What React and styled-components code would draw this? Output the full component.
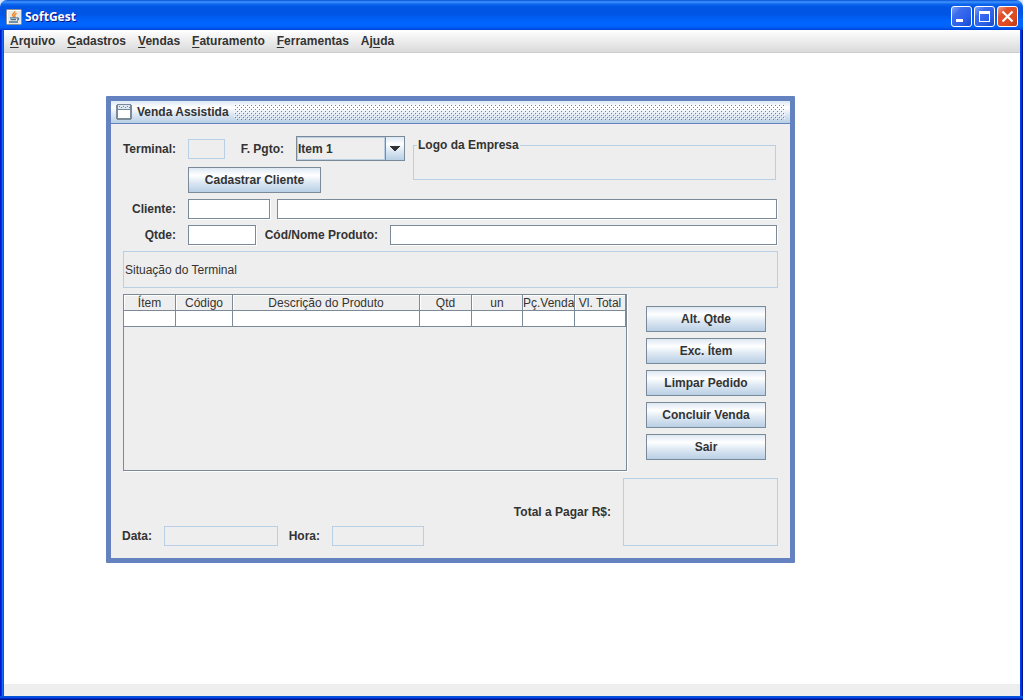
import { useState } from 'react'
import styled, { createGlobalStyle } from 'styled-components'

const GlobalStyle = createGlobalStyle`
  * {
    box-sizing: border-box;
  }

  body {
    margin: 0;
  }

  body, button, input, select {
    font-family: "Liberation Sans", Arial, sans-serif;
    font-size: 12px;
    font-weight: 700;
    line-height: 14px;
    color: #333;
  }
`

const metal = `linear-gradient(
  to bottom,
  #dde8f3 0%,
  #ffffff 30%,
  #dde8f3 60%,
  #b8cfe5 100%
)`

const AppWindow = styled.div`
  display: flex;
  flex-direction: column;
  min-height: 100vh;
  background: linear-gradient(to right, #0019cf 0 1px, #0831d9 1px 2px, #166aee 2px 3px, #0855dd 3px 4px, #0855dd 50%, #0140e8 50% calc(100% - 2px), #0831c8 calc(100% - 2px) calc(100% - 1px), #00138c calc(100% - 1px));
`

const TitleBar = styled.header`
  display: flex;
  align-items: center;
  gap: 3px;
  height: 30px;
  padding: 3px 5px 0 6px;
  border-radius: 7px 7px 0 0;
  background: linear-gradient(
    to bottom,
    #0a4fd6 0,
    #3d95ff 2px,
    #1067ee 4px,
    #0055e5 7px,
    #0055e5 14px,
    #0062fb 20px,
    #0066ff 25px,
    #005bf0 28px,
    #003dd7 30px
  );
`

const TopCorners = styled.div`
  background: #d8e4f8;
`

const WindowTitle = styled.h1`
  flex: 1;
  margin: 0;
  font-family: "Open Sans", "Noto Sans", sans-serif;
  font-size: 12px;
  line-height: 16px;
  color: #fff;
  text-shadow: 1px 1px 0 #0f1089;
`

const WindowControls = styled.div`
  display: flex;
  gap: 2px;
`

const ControlButton = styled.button`
  display: flex;
  width: 21px;
  height: 21px;
  padding: 0;
  border: 1px solid #fff;
  border-radius: 3px;
  background: ${({ $close }) =>
    $close
      ? 'linear-gradient(135deg, #f0a088 0%, #e0502c 30%, #dc4a20 70%, #b83810 100%)'
      : 'linear-gradient(135deg, #7da2f5 0%, #3a6cee 30%, #2a5ee8 70%, #1848c8 100%)'};
`

const Client = styled.div`
  display: flex;
  flex: 1;
  flex-direction: column;
  margin: 0 3px 0 4px;
`

const MenuBar = styled.nav`
  display: flex;
  height: 23px;
  border-bottom: 1px solid #ccc;
  background: linear-gradient(to bottom, #fff, #dadada);
`

const MenuItem = styled.button`
  padding: 0 6px;
  border: 0;
  background: none;

  u {
    text-underline-offset: 2px;
  }
`

const Desktop = styled.main`
  position: relative;
  flex: 1;
  min-height: 520px;
  background: #fff;
`

const StatusBar = styled.footer`
  height: 12px;
  background: #eee;
`

const BottomEdge = styled.div`
  height: 4px;
  background: linear-gradient(to bottom, #0855dd 0 1px, #0347e4 1px 2px, #0130c0 2px 3px, #00138c 3px);
`

const Frame = styled.section`
  position: absolute;
  top: 43px;
  left: 102px;
  width: 689px;
  border: 5px solid #6382bf;
  border-radius: 1px;
  background: #eee;
`

const FrameTitleBar = styled.div`
  display: flex;
  align-items: center;
  gap: 5px;
  height: 23px;
  padding: 0 5px;
  border-bottom: 1px solid #6382bf;
  background: ${metal};
`

const FrameTitle = styled.h2`
  margin: 0;
  font-size: 12px;
  line-height: 14px;
`

const Bumps = styled.svg`
  flex: 1;
  height: 16px;
`

const Form = styled.form`
  display: flex;
  flex-direction: column;
  gap: 6px;
  padding: 12px;
`

const Top = styled.div`
  display: flex;
  gap: 8px;
`

const TopFields = styled.div`
  display: flex;
  flex-direction: column;
  gap: 6px;
`

const Row = styled.div`
  display: flex;
  align-items: center;
  gap: 12px;
  padding-right: ${({ $inset }) => ($inset ? 1 : 0)}px;
`

const FieldPair = styled.div`
  display: flex;
  flex: 1;
  gap: 7px;
`

const Label = styled.label`
  display: flex;
  flex: none;
  justify-content: flex-end;
  width: ${({ $width }) => ($width ? `${$width}px` : 'auto')};
  white-space: nowrap;
`

const TextField = styled.input`
  flex: ${({ $width }) => ($width ? 'none' : 1)};
  width: ${({ $width }) => ($width ? `${$width}px` : 'auto')};
  min-width: 0;
  height: 20px;
  padding: 0 2px;
  border: 1px solid #7a8a99;
  border-radius: 0;
  outline: 0;
  background: #fff;
  font-weight: 400;
  box-shadow: 1px 1px 0 #fff;
`

const ReadOnlyField = styled(TextField).attrs({ readOnly: true })`
  height: ${({ $height }) => $height || 20}px;
  border-color: #b8cfe5;
  background: #eee;
  box-shadow: none;
`

const PaymentGroup = styled.div`
  display: flex;
  align-items: center;
  gap: 12px;
  margin-left: 5px;
`

const Combo = styled.div`
  position: relative;
  width: 109px;
  height: 25px;
  border: 1px solid #7a8a99;
`

const Select = styled.select`
  appearance: none;
  width: 100%;
  height: 100%;
  padding: 0 20px 0 0;
  border: 1px solid #b8cfe5;
  border-radius: 0;
  outline: 0;
  background: #eee;
`

const ComboArrow = styled.span`
  position: absolute;
  top: 0;
  right: 0;
  bottom: 0;
  display: flex;
  align-items: center;
  justify-content: center;
  width: 19px;
  border-left: 1px solid #7a8a99;
  background: ${metal};
  box-shadow: -1px 0 0 #b8cfe5;
  pointer-events: none;
`

const Button = styled.button`
  height: 26px;
  padding: 0 15px;
  border: 1px solid #7a8a99;
  border-radius: 0;
  background: ${metal};
  white-space: nowrap;
`

const ClientButton = styled(Button)`
  align-self: flex-start;
  width: 133px;
  margin-left: 65px;
`

const LogoBox = styled.fieldset`
  flex: 1;
  height: 42px;
  margin: 2px 2px 0 0;
  padding: 0 3px;
  border: 1px solid #b8cfe5;

  legend {
    padding: 0 1px;
  }
`

const Situation = styled.output`
  display: flex;
  align-items: center;
  height: 37px;
  padding: 0 1px;
  border: 1px solid #b8cfe5;
  font-weight: 400;
`

const Middle = styled.div`
  display: flex;
  height: 178px;
  padding-bottom: 1px;
`

const TablePane = styled.div`
  width: 504px;
  border: 1px solid #7a8a99;
  box-shadow: 1px 1px 0 #fff;
`

const ItemsTable = styled.table`
  width: 100%;
  border-spacing: 0;
  table-layout: fixed;
  font-weight: 400;

  th, td {
    height: 16px;
    padding: 0;
    border-right: 1px solid #7a8a99;
    border-bottom: 1px solid #7a8a99;
    white-space: nowrap;
  }

  th {
    overflow: hidden;
    font-weight: 400;
    box-shadow: inset 1px 1px 0 #fff;
  }

  td {
    background: #fff;
  }
`

const Actions = styled.div`
  display: flex;
  flex-direction: column;
  gap: 6px;
  width: 120px;
  margin: 12px 12px 0 auto;
`

const Bottom = styled.div`
  display: flex;
  align-items: flex-end;
  justify-content: space-between;
`

const menus = [
  ['', 'A', 'rquivo'],
  ['', 'C', 'adastros'],
  ['', 'V', 'endas'],
  ['', 'F', 'aturamento'],
  ['', 'F', 'erramentas'],
  ['Aj', 'u', 'da'],
]

const columns = [
  { title: 'Ítem', width: 52 },
  { title: 'Código', width: 57 },
  { title: 'Descrição do Produto', width: 187 },
  { title: 'Qtd', width: 52 },
  { title: 'un', width: 51 },
  { title: 'Pç.Venda', width: 52 },
  { title: 'Vl. Total', width: 51 },
]

const actions = ['Alt. Qtde', 'Exc. Ítem', 'Limpar Pedido', 'Concluir Venda', 'Sair']

function JavaIcon() {
  return (
    <svg width="16" height="16" viewBox="0 0 16 16" aria-hidden="true">
      <rect x="0.5" y="0.5" width="15" height="15" rx="1" fill="#e9e9e6" stroke="#8b8f94" />
      <path d="M1.5 14.5v-13h13" fill="none" stroke="#fff" />
      <path d="M8.8 2.2c.8 1.5-2.6 2.4-2.2 3.9.2.7.9 1.1 1 1.9M10.6 4.3c-1.5.7-2.2 1.3-1.8 2.2.3.6.3 1-.2 1.5" fill="none" stroke="#ee8322" strokeWidth="1.4" />
      <path d="M4 8.9h6.5M4.6 10.6h5.4M3 13h9M10.8 9c2.4-.5 2.4 1.6.2 2.4" fill="none" stroke="#4e7494" strokeWidth="1.3" />
    </svg>
  )
}

function FrameIcon() {
  return (
    <svg width="16" height="16" viewBox="0 0 16 16" shapeRendering="crispEdges" aria-hidden="true">
      <path d="M1 0h14v1h1v14h-1v1H1v-1H0V1h1z" fill="#7a8a99" />
      <path d="M2 1h12v4H2z" fill="#dde8f3" />
      <path d="M2 6h12v8H2z" fill="#fff" />
      <path d="M3 2h1v1H3zM7 2h1v1H7zM11 2h1v1h-1zM5 3h1v1H5zM9 3h1v1H9zM13 3h1v1h-1z" fill="#6382bf" />
    </svg>
  )
}

function AppTitleBar() {
  return (
    <TopCorners>
      <TitleBar>
        <JavaIcon />
        <WindowTitle>SoftGest</WindowTitle>
        <WindowControls>
          <ControlButton type="button" aria-label="Minimizar">
            <svg width="19" height="19" shapeRendering="crispEdges">
              <path d="M4 12h7v3H4z" fill="#fff" />
            </svg>
          </ControlButton>
          <ControlButton type="button" aria-label="Maximizar">
            <svg width="19" height="19" shapeRendering="crispEdges">
              <path d="M4 4h11v11H4zM5 7v7h9V7z" fill="#fff" fillRule="evenodd" />
            </svg>
          </ControlButton>
          <ControlButton type="button" aria-label="Fechar" $close>
            <svg width="19" height="19">
              <path d="M4.5 4.5l10 10M14.5 4.5l-10 10" stroke="#fff" strokeWidth="2.2" />
            </svg>
          </ControlButton>
        </WindowControls>
      </TitleBar>
    </TopCorners>
  )
}

function SaleForm() {
  const [payment, setPayment] = useState('Item 1')

  return (
    <Form onSubmit={(e) => e.preventDefault()}>
      <Top>
        <TopFields>
          <Row>
            <Label $width={53} htmlFor="terminal">Terminal:</Label>
            <ReadOnlyField $width={37} id="terminal" />
            <PaymentGroup>
              <Label $width={42} htmlFor="pagamento">F. Pgto:</Label>
              <Combo>
                <Select id="pagamento" value={payment} onChange={(e) => setPayment(e.target.value)}>
                  <option>Item 1</option>
                  <option>Item 2</option>
                  <option>Item 3</option>
                  <option>Item 4</option>
                </Select>
                <ComboArrow>
                  <svg width="10" height="5" shapeRendering="crispEdges">
                    <path d="M0 0h10v1H9v1H8v1H7v1H6v1H4V4H3V3H2V2H1V1H0z" fill="#333" />
                  </svg>
                </ComboArrow>
              </Combo>
            </PaymentGroup>
          </Row>
          <ClientButton type="button">Cadastrar Cliente</ClientButton>
        </TopFields>
        <LogoBox>
          <legend>Logo da Empresa</legend>
        </LogoBox>
      </Top>

      <Row $inset>
        <Label $width={53} htmlFor="cliente">Cliente:</Label>
        <FieldPair>
          <TextField $width={82} id="cliente" />
          <TextField aria-label="Nome do cliente" />
        </FieldPair>
      </Row>

      <Row $inset>
        <Label $width={53} htmlFor="qtde">Qtde:</Label>
        <TextField $width={68} id="qtde" />
        <Label $width={110} htmlFor="produto">Cód/Nome Produto:</Label>
        <TextField id="produto" />
      </Row>

      <Situation>Situação do Terminal</Situation>

      <Middle>
        <TablePane>
          <ItemsTable>
            <colgroup>
              {columns.map((col) => (
                <col key={col.title} width={col.width} />
              ))}
            </colgroup>
            <thead>
              <tr>
                {columns.map((col) => (
                  <th key={col.title} scope="col">{col.title}</th>
                ))}
              </tr>
            </thead>
            <tbody>
              <tr>
                {columns.map((col) => (
                  <td key={col.title} />
                ))}
              </tr>
            </tbody>
          </ItemsTable>
        </TablePane>
        <Actions>
          {actions.map((action) => (
            <Button key={action} type="button">{action}</Button>
          ))}
        </Actions>
      </Middle>

      <Bottom>
        <Row>
          <Label $width={29} htmlFor="data">Data:</Label>
          <ReadOnlyField $width={114} id="data" />
          <Label $width={30} htmlFor="hora">Hora:</Label>
          <ReadOnlyField $width={92} id="hora" />
        </Row>
        <Row>
          <Label htmlFor="total">Total a Pagar R$:</Label>
          <ReadOnlyField $width={155} $height={68} id="total" />
        </Row>
      </Bottom>
    </Form>
  )
}

function App() {
  return (
    <AppWindow>
      <GlobalStyle />
      <AppTitleBar />
      <Client>
        <MenuBar>
          {menus.map(([before, key, after]) => (
            <MenuItem key={key + after} type="button">
              {before}<u>{key}</u>{after}
            </MenuItem>
          ))}
        </MenuBar>
        <Desktop>
          <Frame>
            <FrameTitleBar>
              <FrameIcon />
              <FrameTitle>Venda Assistida</FrameTitle>
              <Bumps shapeRendering="crispEdges" aria-hidden="true">
                <defs>
                  <pattern id="bumps" width="4" height="4" patternUnits="userSpaceOnUse">
                    <path d="M1 1h1v1H1zM3 3h1v1H3z" fill="#6382bf" />
                    <path d="M2 2h1v1H2zM0 0h1v1H0z" fill="#fff" />
                  </pattern>
                </defs>
                <rect width="100%" height="16" fill="url(#bumps)" />
              </Bumps>
            </FrameTitleBar>
            <SaleForm />
          </Frame>
        </Desktop>
        <StatusBar />
      </Client>
      <BottomEdge />
    </AppWindow>
  )
}

export default App
